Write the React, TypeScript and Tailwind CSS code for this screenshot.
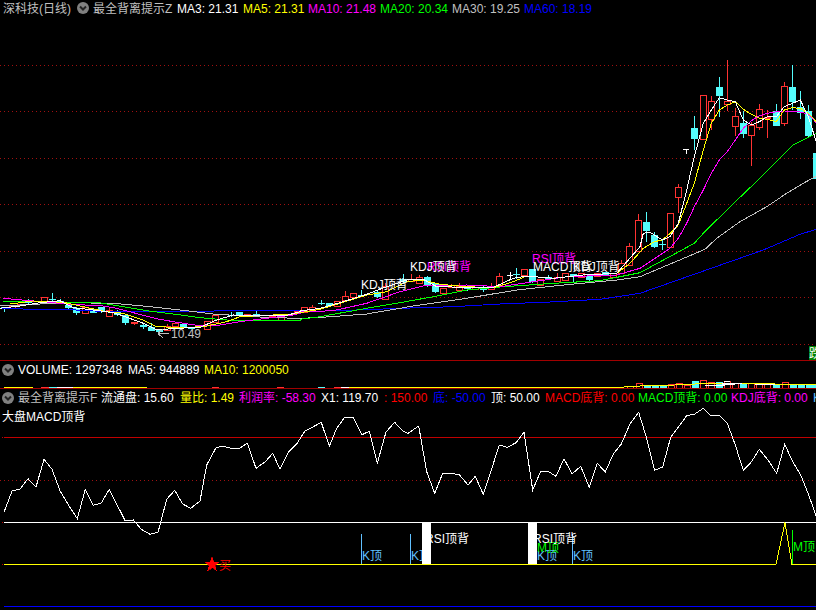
type P = [number, number];
const z = (ox: number, oy: number, pts: P[]): P[] => pts.map(([x, y]) => [ox + x / 3, oy + y / 3]);
const z2 = (p: P[]) => z(600, 50, p);
const z3 = (p: P[]) => z(0, 240, p);
const z4 = (p: P[]) => z(300, 240, p);
const path = (p: P[]) => p.map(([x, y], i) => `${i ? "L" : "M"}${x.toFixed(1)} ${y.toFixed(1)}`).join(" ");

const RED = "#ff3232";
const CYAN = "#54fcfc";
const DOT = "#a01010";

const lines: { c: string; p: P[] }[] = [
  { c: "#0000ff", p: [
    ...z3([[0,205],[100,208],[190,208],[300,214],[450,214],[580,216],[660,212],[900,211]]),
    ...z4([[0,216],[100,212],[200,209],[300,205],[460,200],[600,192],[750,186],[900,178],[1020,160]]),
    ...z2([[490,600],[600,553],[649,538]]),
  ] },
  { c: "#c0c0c0", p: [
    ...z3([[0,198],[200,188],[340,190],[450,200],[560,212],[640,222],[700,226],[780,231],[860,234],[900,235]]),
    ...z4([[0,235],[50,233],[200,222],[340,198],[500,175],[650,150],[800,134],[950,120],[1020,110]]),
    ...z2([[315,598],[350,565],[420,515],[500,470],[560,430],[610,400],[649,378]]),
  ] },
  { c: "#00ff00", p: [
    ...z3([[10,185],[290,187],[340,195],[440,212],[520,222],[600,233],[680,240],[800,243],[900,241]]),
    ...z4([[0,238],[60,230],[200,205],[300,188],[400,170],[500,150],[600,141],[760,130],[900,122],[1020,98]]),
    ...z2([[283,580],[310,550],[350,510],[420,442],[490,375],[540,325],[580,285],[620,265],[649,250]]),
  ] },
  { c: "#ff00ff", p: [
    ...z3([[10,175],[100,183],[200,192],[310,198],[350,205],[400,218],[470,236],[530,247],[600,257],[660,255],[720,245],[800,235],[880,225],[900,220]]),
    ...z4([[0,216],[100,212],[200,190],[300,155],[370,138],[500,135],[600,140],[700,125],[800,110],[950,105],[1020,85]]),
    ...z2([[210,595],[235,565],[260,520],[283,470],[310,420],[334,370],[358,330],[382,305],[406,270],[430,235],[454,212],[478,197],[502,190],[529,185],[553,183],[577,184],[601,186],[625,193],[649,218]]),
  ] },
  { c: "#ffff00", p: [
    ...z3([[30,192],[100,183],[190,187],[250,200],[320,215],[370,220],[430,240],[470,260],[560,263],[620,258],[680,245],[720,230],[800,226],[880,222],[900,218]]),
    ...z4([[0,218],[60,208],[120,190],[200,165],[260,155],[320,125],[370,120],[420,133],[500,140],[580,143],[640,125],[680,108],[760,115],[850,105],[950,100],[990,70]]),
    ...z2([[130,595],[163,575],[187,570],[211,550],[235,525],[260,460],[283,400],[310,300],[334,220],[358,180],[382,165],[406,155],[430,178],[454,193],[478,205],[502,208],[529,215],[553,180],[577,173],[601,175],[625,190],[649,215]]),
  ] },
  { c: "#ffffff", p: [
    ...z3([[0,205],[60,198],[120,188],[180,182],[220,203],[280,210],[340,218],[380,232],[430,250],[470,270],[530,265],[600,262],[650,240],[700,225],[780,228],[860,226],[900,215]]),
    ...z4([[0,213],[60,205],[120,188],[200,163],[260,140],[320,120],[370,118],[410,140],[500,142],[580,142],[640,115],[680,108],[760,115],[850,105],[950,100],[985,60],[1020,20]]),
    ...z2([[130,550],[150,547],[187,570],[210,560],[235,520],[260,420],[283,320],[310,220],[334,180],[358,143],[382,150],[406,155],[430,210],[454,225],[478,215],[502,200],[529,200],[553,170],[577,160],[601,150],[625,200],[649,275]]),
  ] },
];

type C = [number, number, number, number, number, number];
const c3: C[] = [
  [12,200,202,208,215,0],[36,196,198,205,208,1],[60,192,193,196,198,1],[84,178,186,189,192,0],[132,172,172,186,190,1],
  [156,160,176,180,184,0],[180,178,184,190,192,0],[204,195,195,204,208,0],[228,200,205,220,224,0],[255,200,200,220,222,1],
  [280,205,208,218,220,0],[304,200,200,215,218,0],[328,200,210,228,230,1],[352,210,216,226,228,0],[376,222,226,248,256,0],
  [402,245,245,250,255,1],[428,250,255,262,268,0],[452,250,260,272,274,0],[476,268,268,275,276,0],[500,252,258,270,272,1],
  [524,250,250,258,260,1],[548,252,252,262,264,0],[572,260,260,266,268,0],[622,244,244,266,267,1],[646,226,226,246,250,1],
  [694,216,224,228,230,0],[718,216,216,226,228,0],[742,222,222,226,228,1],[768,212,222,226,228,0],[816,224,224,228,230,1],
  [842,224,228,240,244,1],[866,222,222,226,228,1],[890,214,214,220,222,1],
];
const c4: C[] = [
  [12,202,202,216,218,1],[36,196,202,210,212,1],[64,180,188,190,196,0],[88,188,188,198,200,0],[112,182,182,198,200,1],
  [136,152,167,180,182,1],[160,160,160,172,174,1],[184,150,164,166,172,0],[232,150,156,172,174,0],[256,130,138,176,178,1],
  [308,102,118,126,128,0],[332,102,118,124,126,1],[356,106,110,128,130,1],[380,108,112,136,140,0],[404,130,130,156,160,0],
  [428,144,144,160,162,1],[452,132,136,142,144,1],[476,130,138,150,152,1],[500,140,140,148,152,0],[524,140,140,146,148,1],
  [548,134,144,150,156,0],[572,130,142,146,148,1],[598,100,108,136,138,1],[648,85,102,106,118,0],[672,88,88,104,106,1],
  [696,88,88,126,130,0],[720,116,116,135,136,1],[744,106,110,118,120,0],[770,100,110,122,124,1],[794,100,100,120,122,1],
  [818,102,102,108,128,0],[842,100,100,110,112,1],[866,108,108,120,122,0],[890,98,98,108,110,1],[914,96,96,106,108,0],
  [938,98,98,110,112,1],[964,60,70,100,102,1],[988,8,18,74,76,1],
];
const c2: C[] = [
  [115,492,511,603,604,1],[139,486,516,544,575,0],[163,545,555,590,595,0],[187,566,582,585,600,0],[211,490,490,590,591,1],
  [235,402,412,442,490,1],[283,198,234,267,300,0],[310,136,136,268,269,1],[334,138,154,206,240,1],[358,82,111,138,200,0],
  [382,30,154,163,182,1],[406,175,199,227,258,1],[430,182,220,252,264,0],[454,215,226,254,348,1],[478,162,176,230,240,1],
  [502,180,200,205,264,1],[529,162,184,227,228,0],[553,96,109,220,228,1],[577,45,111,156,180,0],[601,123,170,190,208,0],
  [625,165,184,258,262,0],[649,310,310,388,389,0],
];
const conv = (ox: number, oy: number, a: C[]) =>
  a.map(([x, h, t, b, l, up]) => ({ x: Math.round(ox + x / 3), h: Math.round(oy + h / 3), t: Math.round(oy + t / 3), b: Math.round(oy + b / 3), l: Math.round(oy + l / 3), up: !!up }));
const candles = [...conv(0, 240, c3), ...conv(300, 240, c4), ...conv(600, 50, c2)];

const curve: P[] = [
  ...z(0, 420, [[12,277],[36,213],[60,207],[84,176],[108,201],[132,118],[156,148],[180,212],[204,253],[232,296],[256,208],[280,256],[304,249],[328,208],[352,256],[376,303],[400,300],[424,328],[450,343],[474,337],[500,238],[524,211],[548,252],[572,265],[600,243],[620,135],[648,83],[668,78],[692,85],[718,85],[742,70],[768,145],[796,125],[818,100],[840,148],[866,95],[890,72],[914,34],[940,20],[964,7],[988,79],[1010,25],[1034,-8],[1060,-8],[1086,44],[1108,34],[1132,130],[1158,36],[1184,7],[1208,33]]),
  ...z(408, 400, [[0,100],[32,78],[56,215],[80,280],[104,220],[130,220],[154,224],[180,255],[202,229],[226,283],[250,210],[274,135],[298,142],[324,128],[348,97],[374,270],[398,214],[420,214],[444,229],[468,176],[492,222],[518,199],[544,262],[568,190],[592,216],[616,162],[640,132],[666,72],[692,37],[716,115],[740,211],[764,201],[788,112],[812,80],[836,47],[860,42],[886,25],[910,48],[934,46],[958,70],[982,135],[1006,211],[1030,186],[1054,148],[1080,180],[1106,220],[1130,133],[1154,185],[1178,225],[1202,285],[1224,347]]),
];

const volBars: [number, number, string][] = [
  [665,93,"#ff8000"],[692,85,RED],[716,91,CYAN],[740,93,CYAN],[765,93,CYAN],[788,88,RED],[812,85,RED],[836,90,RED],[860,78,CYAN],
  [886,76,RED],[910,82,RED],[934,82,CYAN],[958,78,RED],[982,83,RED],[1006,85,CYAN],[1030,83,RED],[1054,85,RED],[1078,85,RED],
  [1104,86,CYAN],[1130,82,RED],[1154,86,CYAN],[1178,86,CYAN],[1202,88,CYAN],[1222,88,CYAN],
];

function Chev() {
  return (
    <svg width="12" height="12" viewBox="0 0 12 12" className="shrink-0">
      <circle cx="6" cy="6" r="6" fill="#808080" />
      <path d="M3 4.5 L6 7.5 L9 4.5" stroke="#222222" strokeWidth="2" fill="none" />
    </svg>
  );
}

function Item({ w, c, children }: { w: string; c: string; children: React.ReactNode }) {
  return <span className={`${w} ${c} shrink-0 whitespace-nowrap`}>{children}</span>;
}

export default function App() {
  return (
    <div className="w-[816px] h-[610px] overflow-hidden bg-black flex flex-col text-[12px] leading-[14px] font-['Liberation_Sans','Noto_Sans_CJK_SC',sans-serif]">
      {/* title row */}
      <div className="h-[24px] shrink-0 flex items-start pt-[2px] pl-[3px] overflow-hidden">
        <span className="w-[74px] shrink-0 whitespace-nowrap text-[#c0c0c0]">深科技(日线)</span>
        <Chev />
        <span className="w-[88px] shrink-0 pl-[4px] whitespace-nowrap text-[#c0c0c0]">最全背离提示Z</span>
        <div className="flex gap-[7px]">
          <Item w="w-[59px]" c="text-white">MA3: 21.31</Item>
          <Item w="w-[58px]" c="text-[#ffff00]">MA5: 21.31</Item>
          <Item w="w-[65px]" c="text-[#ff00ff]">MA10: 21.48</Item>
          <Item w="w-[65px]" c="text-[#00ff00]">MA20: 20.34</Item>
          <Item w="w-[65px]" c="text-[#c0c0c0]">MA30: 19.25</Item>
          <Item w="w-[66px]" c="text-[#0000ff]">MA60: 18.19</Item>
        </div>
      </div>

      {/* price chart */}
      <svg width="816" height="336" viewBox="0 24 816 336" className="block shrink-0 text-[12px]" shapeRendering="crispEdges">
        {[65, 111, 158, 204, 251, 297, 344].map((y) => (
          <line key={y} x1="0" x2="816" y1={y + 0.5} y2={y + 0.5} stroke={DOT} strokeDasharray="1 3" />
        ))}
        {candles.map((k, i) => (
          <g key={i}>
            <line x1={k.x + 0.5} x2={k.x + 0.5} y1={k.h} y2={k.l} stroke={k.up ? RED : CYAN} />
            {k.up ? (
              <rect x={k.x - 3 + 0.5} y={k.t + 0.5} width="6" height={Math.max(k.b - k.t, 1)} fill="#000000" stroke={RED} />
            ) : (
              <rect x={k.x - 3} y={k.t} width="7" height={Math.max(k.b - k.t, 1)} fill={CYAN} />
            )}
          </g>
        ))}
        <path d="M683 149.5 H689 M686.5 149.5 V154" stroke="#ffffff" fill="none" />
        <path d="M507 275.5 H513 M510.5 272 V279" stroke="#ffffff" fill="none" />
        {lines.map((l) => (
          <path key={l.c} d={path(l.p)} stroke={l.c} strokeWidth="1" fill="none" />
        ))}
        <text x="361" y="289" fill="#ffffff">KDJ顶背</text>
        <text x="427" y="271" fill="#ff00ff">RSI顶背</text>
        <text x="410" y="271" fill="#ffffff">KDJ顶背</text>
        <text x="532" y="263" fill="#ff00ff">RSI顶背</text>
        <text x="533" y="271" fill="#ffffff">MACD顶背</text>
        <text x="573" y="271" fill="#ffffff">KDJ顶背</text>
        <path d="M158 333.5 H169 M158 333.5 L163 329 M158 333.5 L163 338" stroke="#c0c0c0" fill="none" />
        <text x="171" y="338" fill="#c0c0c0">10.49</text>
        <svg x="809" y="346" width="7" height="14" viewBox="809 346 7 14">
          <rect x="809" y="346" width="7" height="14" fill="#008000" />
          <text x="809" y="358" fill="#ffffff">跌</text>
        </svg>
      </svg>

      {/* volume pane */}
      <div className="shrink-0 border-t border-[#a00000]">
        <div className="h-[17px] flex items-center pl-[2px] gap-[4px] overflow-hidden">
          <Chev />
          <div className="flex gap-[6px]">
            <Item w="w-[104px]" c="text-white">VOLUME: 1297348</Item>
            <Item w="w-[70px]" c="text-white">MA5: 944889</Item>
            <Item w="w-[84px]" c="text-[#ffff00]">MA10: 1200050</Item>
          </div>
        </div>
        <svg width="816" height="10" viewBox="0 378 816 10" className="block" shapeRendering="crispEdges">
          {volBars.map(([x, t, c], i) => {
            const X = Math.round(408 + x / 3);
            const Y = Math.round(355 + t / 3);
            return c === CYAN ? (
              <rect key={i} x={X - 3} y={Y} width="7" height={388 - Y} fill={c} />
            ) : (
              <rect key={i} x={X - 2.5} y={Y + 0.5} width="6" height={388 - Y} fill="#000000" stroke={c} />
            );
          })}
          <path d="M4 387.5 H33" stroke="#ffff00" />
          <path d="M41 387.5 H49" stroke={RED} />
          <path d="M49 387.5 H57" stroke={CYAN} />
          <path d="M57 387.5 H73" stroke="#ffffff" />
          <path d="M73 387.5 H147" stroke="#ffff00" />
          <path d="M212 387.5 H219 M277 387.5 H284 M334 387.5 H341" stroke={RED} />
          <path d="M318 387.5 H325" stroke={CYAN} />
          <path d="M341 387.5 H349" stroke="#ffffff" />
          <path d="M349 387.5 H624" stroke="#ffff00" />
          <path d="M624 387 L640 386 L675 385 L695 384 L708 383 L742 383 L775 384 L805 384 L816 385" stroke="#ffff00" fill="none" />
          <path d="M705 385 L725 385 M722 383 L742 383 M724 381 L730 381 M722 384 L735 384 M755 384 L775 384" stroke="#ffffff" fill="none" />
        </svg>
      </div>

      {/* indicator pane */}
      <div className="shrink-0 border-t border-[#a00000] flex-1 flex flex-col">
        <div className="h-[17px] shrink-0 flex items-center pl-[2px] gap-[4px] overflow-hidden">
          <Chev />
          <div className="flex gap-[5px]">
            <Item w="w-[78px]" c="text-[#c0c0c0]">最全背离提示F</Item>
            <Item w="w-[74px]" c="text-white">流通盘: 15.60</Item>
            <Item w="w-[54px]" c="text-[#ffff00]">量比: 1.49</Item>
            <Item w="w-[77px]" c="text-[#ff00ff]">利润率: -58.30</Item>
            <Item w="w-[58px]" c="text-white">X1: 119.70</Item>
            <Item w="w-[44px]" c="text-[#ff0000]">: 150.00</Item>
            <Item w="w-[53px]" c="text-[#0000ff]">底: -50.00</Item>
            <Item w="w-[49px]" c="text-white">顶: 50.00</Item>
            <Item w="w-[88px]" c="text-[#ff0000]">MACD底背: 0.00</Item>
            <Item w="w-[88px]" c="text-[#00ff00]">MACD顶背: 0.00</Item>
            <Item w="w-[77px]" c="text-[#ff00ff]">KDJ底背: 0.00</Item>
            <Item w="w-[40px]" c="text-[#60c0ff]">KDJ顶背</Item>
          </div>
        </div>
        <svg width="816" height="204" viewBox="0 406 816 204" className="block shrink-0 text-[12px]" shapeRendering="crispEdges">
          <text x="2" y="421" fill="#ffffff">大盘MACD顶背</text>
          <line x1="4" x2="816" y1="437.5" y2="437.5" stroke="#c00000" />
          <line x1="0" x2="816" y1="480.5" y2="480.5" stroke={DOT} strokeDasharray="1 3" />
          <line x1="4" x2="816" y1="522.5" y2="522.5" stroke="#ffffff" />
          <path d="M4 564.5 H776 L785 522.5 L792 564.5 H816" stroke="#ffff00" fill="none" />
          <line x1="4" x2="816" y1="606.5" y2="606.5" stroke="#0000ff" />
          <path d={path(curve)} stroke="#ffffff" fill="none" />
          <path d="M2 437.5 H3 M2 522.5 H3 M2 564.5 H3" stroke="#c00000" />

          {[361, 410, 572].map((x) => (
            <line key={x} x1={x + 0.5} x2={x + 0.5} y1="534" y2="564" stroke="#60c0ff" />
          ))}
          <text x="362" y="560" fill="#60c0ff">K顶</text>
          <text x="411" y="560" fill="#60c0ff">K顶</text>
          <text x="537" y="560" fill="#60c0ff">K顶</text>
          <text x="573" y="560" fill="#60c0ff">K顶</text>
          <text x="537" y="552" fill="#00ff00">M顶</text>
          <text x="425" y="543" fill="#ffffff">RSI顶背</text>
          <text x="533" y="543" fill="#ffffff">RSI顶背</text>
          <rect x="422" y="523" width="9" height="41" fill="#ffffff" />
          <rect x="528" y="523" width="9" height="41" fill="#ffffff" />

          <line x1="792.5" x2="792.5" y1="530" y2="564" stroke="#00ff00" />
          <text x="793" y="551" fill="#00ff00">M顶</text>

          <polygon points="212,557 214,562 219,562 215,565.5 216.5,570.5 212,567.5 207.5,570.5 209,565.5 205,562 210,562" fill="#ff0000" stroke="#ff0000" strokeWidth="0.6" />
          <text x="219" y="570" fill="#ff0000">买</text>
        </svg>
      </div>
    </div>
  );
}
